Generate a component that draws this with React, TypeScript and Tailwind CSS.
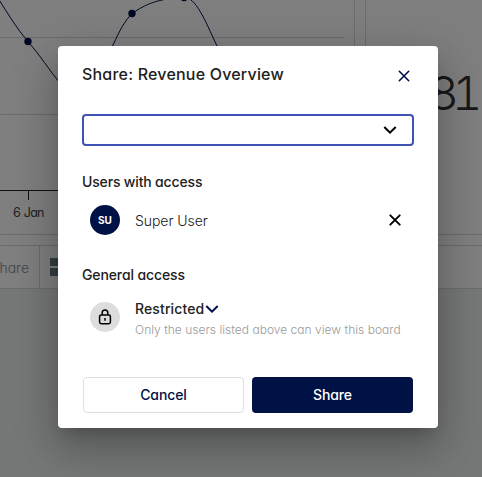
import React from "react";

function RevenueChart() {
  return (
    <svg width="354" height="234" viewBox="0 0 354 234" className="block" fill="none">
      <path d="M0 37.5H344M0 114.5H344" stroke="#d8d8d8" />
      <path d="M0 190.5H344M28.5 190V200" stroke="#222222" />
      <path
        d="M-2 -2C8 14 17 29 28 41.5C40 55 49 70 60 83C80 105 100 79 113 45C120 30 124 22 132 13.5C146 4 157 -1 184 -3C196 -2 204 18 217 46C228 70 240 95 255 110"
        stroke="#001146"
        strokeWidth="1"
      />
      <g fill="#001146">
        <circle cx="28" cy="41.5" r="3.7" />
        <circle cx="132" cy="13.5" r="3.7" />
        <circle cx="184" cy="-2.5" r="3.7" />
      </g>
      <text x="13" y="217" fontSize="12.5" fontWeight="400" wordSpacing="1" fill="#444444" textLength="31.5">6 Jan</text>
    </svg>
  );
}

function Board() {
  return (
    <div className="flex h-full flex-col bg-[#ebf0ef]">
      <div className="flex h-[245px] shrink-0 gap-[10px] bg-white pb-[10px]">
        <div className="w-[355px] shrink-0 overflow-hidden border-r border-b border-[#d8d8d8] bg-white">
          <RevenueChart />
        </div>
        <div className="flex grow justify-end border-b border-l border-[#d8d8d8] bg-white pt-[64px] pr-[6px] text-[47px] leading-[57px] font-[350] tracking-[-6.5px] text-[#333333] tabular-nums">
          81
        </div>
      </div>
      <div className="flex h-[44px] shrink-0 border-y border-[#d8d8d8] bg-white">
        <div className="flex w-[40px] items-center justify-end border-r border-[#d8d8d8] pr-[10px] text-[14px] text-[#7d8b96]">
          <span className="font-[350]">Share</span>
        </div>
        <svg width="28" height="20" viewBox="0 0 28 20" className="mt-[11px] ml-[10px]" fill="#6b7c88">
          <path d="M0 1h9v8H0zM10 1h9v8h-9zM0 11h9v8H0zM10 11h9v8h-9z" />
        </svg>
      </div>
    </div>
  );
}

function Cross({ className }: { className: string }) {
  return (
    <svg width="12" height="12" viewBox="0 0 12 12" className={className} fill="none" stroke="currentColor" strokeLinecap="round">
      <path d="M1.3 1.3L10.7 10.7M10.7 1.3L1.3 10.7" />
    </svg>
  );
}

function Chevron() {
  return (
    <svg width="14" height="10" viewBox="0 0 14 10" fill="none" stroke="currentColor" strokeWidth="2">
      <path d="M1.3 2L7 7.7L12.7 2" />
    </svg>
  );
}

function ShareDialog() {
  return (
    <div className="flex h-[382px] w-[380px] flex-col rounded-[4px] bg-white px-[24px] text-[14px] text-[#212121] shadow-[0px_11px_15px_-7px_rgba(0,0,0,0.2),0px_24px_38px_3px_rgba(0,0,0,0.14),0px_9px_46px_8px_rgba(0,0,0,0.12)]">
      <div className="flex h-[68px] items-start justify-between pr-[4px]">
        <h2 className="mt-[18px] text-[16px] leading-[20px] font-medium tracking-[0.2px]">Share: Revenue Overview</h2>
        <button aria-label="Close" className="mt-[24px]">
          <Cross className="stroke-[1.6] text-[#001146]" />
        </button>
      </div>
      <div className="flex h-[32px] w-[332px] shrink-0 items-center justify-end rounded-[4px] border-2 border-[#3f51b5] pr-[15px] text-black">
        <Chevron />
      </div>
      <h3 className="mt-[26px] leading-[20px] font-[460] tracking-[-0.16px]">Users with access</h3>
      <div className="mt-[13px] flex h-[30px] items-center pr-[13px] pl-[8px]">
        <div className="flex size-[30px] items-center justify-center rounded-full bg-[#001146] pb-[1px] text-[10px] leading-[14px] font-bold text-white">SU</div>
        <span className="ml-[15px] grow font-[350] tracking-[-0.05px]">Super User</span>
        <Cross className="stroke-[1.9] text-black" />
      </div>
      <h3 className="mt-[30px] leading-[20px] font-[460] tracking-[-0.12px]">General access</h3>
      <div className="mt-[13px] flex h-[41px] pl-[8px]">
        <div className="mt-[4px] flex size-[30px] shrink-0 items-center justify-center rounded-full bg-[#dddddd]">
          <svg width="14" height="16" viewBox="0 0 14 16" fill="none" stroke="#000000" strokeWidth="1.5">
            <rect x="1.6" y="6" width="10.8" height="8.7" rx="1.6" />
            <path d="M4.2 6V3.8a2.8 2.8 0 0 1 5.6 0V6M7 9v2.8" />
          </svg>
        </div>
        <div className="ml-[15px] whitespace-nowrap">
          <div className="flex h-[20px] items-center gap-[1px] font-[460] tracking-[0.12px]">
            Restricted
            <span className="mt-[1px] text-[#001146]"><Chevron /></span>
          </div>
          <p className="mt-[2px] text-[12px] leading-[20px] font-light tracking-[0.02px] text-[#999999]">Only the users listed above can view this board</p>
        </div>
      </div>
      <div className="mt-[38px] flex h-[36px] shrink-0 gap-[8px] px-[1px] font-medium">
        <button className="w-[161px] rounded-[4px] border border-[#e0e0e0] pb-[2px] tracking-[-0.1px] text-[#001146]">Cancel</button>
        <button className="w-[161px] rounded-[4px] bg-[#001146] pb-[2px] tracking-[-0.1px] text-white">Share</button>
      </div>
    </div>
  );
}

export default function App() {
  return (
    <div className="relative h-[477px] w-[482px] overflow-hidden font-['Inter',sans-serif] [font-feature-settings:'cv11']">
      <Board />
      <div className="absolute inset-0 flex bg-black/50 pt-[46px] pl-[58px]">
        <ShareDialog />
      </div>
    </div>
  );
}
